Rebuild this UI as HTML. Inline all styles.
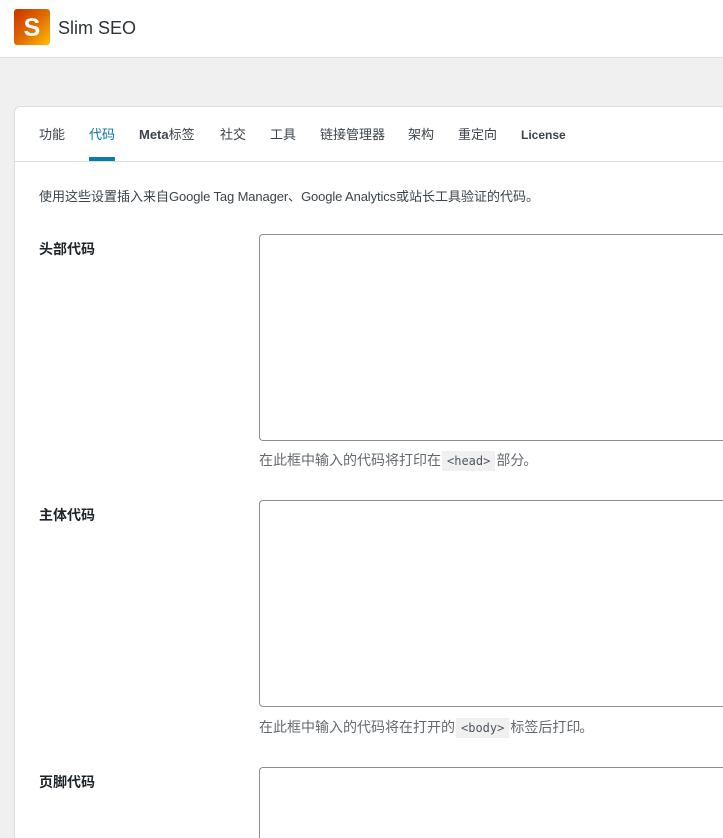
<!DOCTYPE html>
<html lang="zh">
<head>
<meta charset="utf-8">
<title>Slim SEO</title>
<style>
html,body{margin:0;padding:0;width:723px;height:838px;overflow:hidden;background:#f0f0f1;}
body{position:relative;font-family:"Liberation Sans","Noto Sans CJK SC",sans-serif;font-size:13px;color:#3c434a;}
.abs{position:absolute;white-space:nowrap;line-height:20px;}
#hdr{position:absolute;left:0;top:0;width:723px;height:57px;background:#fff;border-bottom:1px solid #dcdcde;}
#logo{position:absolute;left:14px;top:9px;width:36px;height:36px;border-radius:3px;background:linear-gradient(135deg,#c93400 0%,#e06a00 50%,#ffbe00 100%);color:#fff;font-weight:700;font-size:25px;line-height:39px;text-align:center;}
#card{position:absolute;left:14px;top:106px;width:709px;height:732px;background:#fff;border:1px solid #dcdcde;border-right:none;border-bottom:none;border-radius:6px 0 0 0;box-sizing:border-box;}
#tabline{position:absolute;left:15px;top:161px;width:708px;height:1px;background:#dcdcde;}
#active{position:absolute;left:89px;top:157px;width:26px;height:4px;background:#0a7cb0;}
.tab{top:125px;}
.lbl{left:39px;font-weight:700;font-size:14px;color:#1d2327;}
.ta{position:absolute;left:259px;width:464px;box-sizing:border-box;border:1px solid #8c8f94;border-right:none;border-radius:4px 0 0 4px;background:#fff;}
.desc{left:259px;color:#646970;font-size:14px;}
.lat{letter-spacing:-.12px;}
.dot{margin-left:-1px;}
code{font-family:"DejaVu Sans Mono","Liberation Mono",monospace;font-size:12px;background:#f0f0f1;color:#50575e;padding:3px 5px;margin:0 1px;}
</style>
</head>
<body>
<div id="hdr"></div>
<div id="logo">S</div>
<div class="abs" style="left:58px;top:18px;font-size:18px;color:#2c3338;">Slim SEO</div>

<div id="card"></div>
<div id="tabline"></div>
<div id="active"></div>

<div class="abs tab" style="left:39px;">功能</div>
<div class="abs tab" style="left:89px;color:#0a73a5;">代码</div>
<div class="abs tab" style="left:139px;"><b>Meta</b>标签</div>
<div class="abs tab" style="left:220px;">社交</div>
<div class="abs tab" style="left:270px;">工具</div>
<div class="abs tab" style="left:320px;">链接管理器</div>
<div class="abs tab" style="left:408px;">架构</div>
<div class="abs tab" style="left:458px;">重定向</div>
<div class="abs tab" style="left:521px;font-weight:700;font-size:12px;">License</div>

<div class="abs" style="left:39px;top:187px;">使用这些设置插入来自<span class="lat">Google Tag Manager</span>、<span class="lat">Google Analytics</span>或站长工具验证的代码。</div>

<div class="abs lbl" style="top:239px;">头部代码</div>
<div class="ta" style="top:234px;height:207px;"></div>
<div class="abs desc" style="top:450px;">在此框中输入的代码将打印在<code>&lt;head&gt;</code>部分<span class="dot">。</span></div>

<div class="abs lbl" style="top:505px;">主体代码</div>
<div class="ta" style="top:500px;height:207px;"></div>
<div class="abs desc" style="top:717px;">在此框中输入的代码将在打开的<code>&lt;body&gt;</code>标签后打印<span class="dot">。</span></div>

<div class="abs lbl" style="top:772px;">页脚代码</div>
<div class="ta" style="top:767px;height:71px;border-bottom:none;border-radius:4px 0 0 0;"></div>
</body>
</html>
